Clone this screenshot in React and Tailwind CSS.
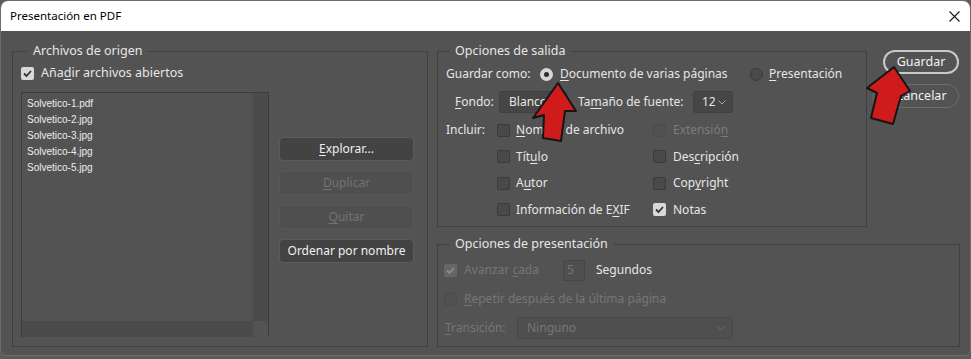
import React from 'react';

const Check = ({ color = '#333' }) => (
    <svg width="13" height="13" viewBox="0 0 13 13">
        <path d="M3 6.5 L5.5 9 L10 4" fill="none" stroke={color} strokeWidth="1.8" />
    </svg>
);

const Box = ({ checked, disabled }) => {
    if (checked && disabled) {
        return (
            <span className="w-[13px] h-[13px] rounded-[2px] bg-[#666666] flex items-center justify-center shrink-0">
                <Check color="#8e8e8e" />
            </span>
        );
    }
    if (checked) {
        return (
            <span className="w-[13px] h-[13px] rounded-[2px] bg-[#d8d8d8] flex items-center justify-center shrink-0">
                <Check />
            </span>
        );
    }
    return (
        <span
            className={`w-[13px] h-[13px] rounded-[2px] border shrink-0 ${
                disabled ? 'border-[#4c4c4c] bg-[#515151]' : 'border-[#3a3a3a] bg-[#494949]'
            }`}
        />
    );
};

const Chevron = ({ color = '#a8a8a8' }) => (
    <svg width="8" height="5" viewBox="0 0 8 5">
        <path d="M0.5 0.5 L4 4 L7.5 0.5" fill="none" stroke={color} strokeWidth="1" />
    </svg>
);

const U = ({ children }) => <span className="underline underline-offset-2">{children}</span>;

// check row used inside "Incluir"
const Opt = ({ checked, disabled, children, gap = 'ml-[6px]' }) => (
    <div className="flex items-center h-[20px]">
        <Box checked={checked} disabled={disabled} />
        <span className={`${gap} ${disabled ? 'text-[#7c7c7c]' : 'text-[#e6e6e6]'}`}>{children}</span>
    </div>
);

const files = ['Solvetico-1.pdf', 'Solvetico-2.jpg', 'Solvetico-3.jpg', 'Solvetico-4.jpg', 'Solvetico-5.jpg'];

export default function App() {
    return (
        <div className="w-[971px] h-[359px] bg-[#5c5c5c] font-['Noto_Sans','Open_Sans',sans-serif] text-[12px] leading-[18px] overflow-hidden">
            <div className="relative h-[356px] rounded-t-[8px] rounded-b-[6px] border border-[#6c6c6c] bg-[#535353] flex flex-col overflow-hidden">
                {/* Title bar */}
                <div className="h-[30px] bg-white flex items-center justify-between pl-[9px] pr-[10px] shrink-0">
                    <span className="text-[11.5px] text-black">Presentación en PDF</span>
                    <svg width="11" height="11" viewBox="0 0 11 11">
                        <path d="M0.5 0.5 L10.5 10.5 M10.5 0.5 L0.5 10.5" stroke="#1a1a1a" strokeWidth="1.1" />
                    </svg>
                </div>

                {/* Body */}
                <div className="flex pl-[11px] pt-[11px] text-[#e6e6e6]">
                    {/* Archivos de origen */}
                    <fieldset className="w-[416px] h-[305px] border border-[#404040] m-0 p-0">
                        <legend className="ml-[14px] px-[6px] leading-[18px] text-[12.5px]">Archivos de origen</legend>
                        <div className="flex items-center h-[18px] mt-[4px] pl-[8px]">
                            <Box checked />
                            <span className="ml-[7px] text-[12.5px]">Aña<U>d</U>ir archivos abiertos</span>
                        </div>
                        <div className="flex mt-[10px] pl-[8px]">
                            <div className="w-[248px] h-[245px] border-t border-l border-r border-[#3c3c3c] flex flex-col">
                                <div className="flex flex-1">
                                    <div className="flex-1 pt-[3px] pl-[5px] font-['Liberation_Sans',sans-serif] text-[10px] leading-[16px] text-[#ececec]">
                                        {files.map((f) => (
                                            <div key={f}>{f}</div>
                                        ))}
                                    </div>
                                    <div className="w-[15px] bg-[#4b4b4b]" />
                                </div>
                                <div className="flex h-[16px]">
                                    <div className="flex-1 bg-[#4b4b4b]" />
                                    <div className="w-[15px]" />
                                </div>
                            </div>
                            <div className="ml-[10px] mt-[45px] flex flex-col gap-[10px]">
                                <button className="w-[135px] h-[24px] rounded-[4px] border border-[#5c5c5c] bg-[#434343] text-[#f0f0f0]">
                                    <U>E</U>xplorar...
                                </button>
                                <button className="w-[135px] h-[24px] rounded-[4px] border border-[#575757] bg-[#4f4f4f] text-[#737373]">
                                    <U>D</U>uplicar
                                </button>
                                <button className="w-[135px] h-[24px] rounded-[4px] border border-[#575757] bg-[#4f4f4f] text-[#737373]">
                                    <U>Q</U>uitar
                                </button>
                                <button className="w-[135px] h-[24px] rounded-[4px] border border-[#5c5c5c] bg-[#434343] text-[#f0f0f0]">
                                    Ordenar por nombre
                                </button>
                            </div>
                        </div>
                    </fieldset>

                    {/* Right column */}
                    <div className="ml-[9px] w-[524px] flex flex-col">
                        <div className="flex">
                            {/* Opciones de salida */}
                            <fieldset className="w-[430px] h-[185px] border border-[#404040] m-0 p-0">
                                <legend className="ml-[11px] px-[6px] leading-[18px] text-[12.5px]">Opciones de salida</legend>
                                <div className="pl-[8px]">
                                    <div className="flex items-center h-[20px] mt-[4px]">
                                        <span className="w-[94px]">Guardar como:</span>
                                        <div className="w-[210px] flex items-center">
                                            <span className="w-[13px] h-[13px] rounded-full bg-[#d6d6d6] flex items-center justify-center">
                                                <span className="w-[5px] h-[5px] rounded-full bg-[#2e2e2e]" />
                                            </span>
                                            <span className="ml-[7px]"><U>D</U>ocumento de varias páginas</span>
                                        </div>
                                        <span className="w-[13px] h-[13px] rounded-full border border-[#3a3a3a] bg-[#494949]" />
                                        <span className="ml-[6px]"><U>P</U>resentación</span>
                                    </div>

                                    <div className="flex items-center h-[22px] mt-[7px]">
                                        <span className="ml-[9px] w-[44px]"><U>F</U>ondo:</span>
                                        <div className="w-[68px] h-[22px] rounded-[3px] border border-[#3e3e3e] bg-[#464646] flex items-center justify-between pl-[9px] pr-[7px]">
                                            <span>Blanco</span>
                                            <Chevron />
                                        </div>
                                        <span className="ml-[11px] w-[115px]">Ta<U>m</U>año de fuente:</span>
                                        <div className="w-[40px] h-[22px] rounded-[3px] border border-[#3e3e3e] bg-[#464646] flex items-center justify-between pl-[8px] pr-[6px]">
                                            <span>12</span>
                                            <Chevron />
                                        </div>
                                    </div>

                                    <div className="grid grid-cols-[51px_156px_1fr] gap-y-[6.5px] mt-[7px]">
                                        <div className="h-[20px] flex items-center">Incluir:</div>
                                        <Opt><U>N</U>ombre de archivo</Opt>
                                        <Opt disabled gap="ml-[7px]">Extensió<U>n</U></Opt>
                                        <div />
                                        <Opt>Tít<U>u</U>lo</Opt>
                                        <Opt gap="ml-[7px]">Des<U>c</U>ripción</Opt>
                                        <div />
                                        <Opt>A<U>u</U>tor</Opt>
                                        <Opt gap="ml-[7px]">Cop<U>y</U>right</Opt>
                                        <div />
                                        <Opt>Información de E<U>X</U>IF</Opt>
                                        <Opt checked gap="ml-[7px]">Notas</Opt>
                                    </div>
                                </div>
                            </fieldset>

                            {/* Buttons */}
                            <div className="ml-[16px] mt-[8px] flex flex-col gap-[10px]">
                                <button className="w-[76px] h-[24px] rounded-full border-2 border-[#c9c9c9] text-[#f2f2f2] text-[12.5px]">
                                    Guardar
                                </button>
                                <button className="w-[76px] h-[24px] rounded-full border border-[#6e6e6e] text-[#f2f2f2] text-[12.5px]">
                                    Cancelar
                                </button>
                            </div>
                        </div>

                        {/* Opciones de presentación */}
                        <fieldset className="mt-[8px] w-[523px] h-[112px] border border-[#404040] m-0 p-0">
                            <legend className="ml-[11px] px-[6px] leading-[18px] text-[12.5px]">Opciones de presentación</legend>
                            <div className="pl-[6px]">
                                <div className="flex items-center h-[22px] mt-[6px]">
                                    <Box checked disabled />
                                    <span className="ml-[7px] w-[99px] text-[#767676]">Avanzar <U>c</U>ada</span>
                                    <div className="w-[22px] h-[21px] border border-[#474747] bg-[#4f4f4f] pl-[3px] text-[#747474] flex items-center">
                                        5
                                    </div>
                                    <span className="ml-[11px]">Segundos</span>
                                </div>
                                <div className="flex items-center h-[20px] mt-[8px]">
                                    <Box disabled />
                                    <span className="ml-[7px] text-[#767676]"><U>R</U>epetir después de la última página</span>
                                </div>
                                <div className="flex items-center h-[22px] mt-[8px]">
                                    <span className="ml-[1px] w-[72px] text-[#767676]"><U>T</U>ransición:</span>
                                    <div className="w-[216px] h-[22px] rounded-[3px] border border-[#484848] bg-[#4f4f4f] flex items-center justify-between pl-[9px] pr-[7px] text-[#767676]">
                                        <span>Ninguno</span>
                                        <Chevron color="#6c6c6c" />
                                    </div>
                                </div>
                            </div>
                        </fieldset>
                    </div>
                </div>

                {/* Red arrows drawn over the dialog */}
                <svg
                    className="absolute left-[-1px] top-[-1px] pointer-events-none"
                    width="971"
                    height="359"
                    viewBox="0 0 971 359"
                >
                    <polygon
                        points="558,83 576,111 565,111 561,141 543,138 544,115 533,118"
                        fill="#cf1b1b"
                        stroke="#151515"
                        strokeWidth="2"
                        strokeLinejoin="round"
                    />
                    <circle cx="888" cy="97" r="15" fill="none" stroke="rgba(255,255,255,0.12)" strokeWidth="1" />
                    <polygon
                        points="894,67 910,91 901,96 893,124 871,118 877,93 867,88"
                        fill="#cf1b1b"
                        stroke="#151515"
                        strokeWidth="2"
                        strokeLinejoin="round"
                    />
                </svg>
            </div>
        </div>
    );
}
